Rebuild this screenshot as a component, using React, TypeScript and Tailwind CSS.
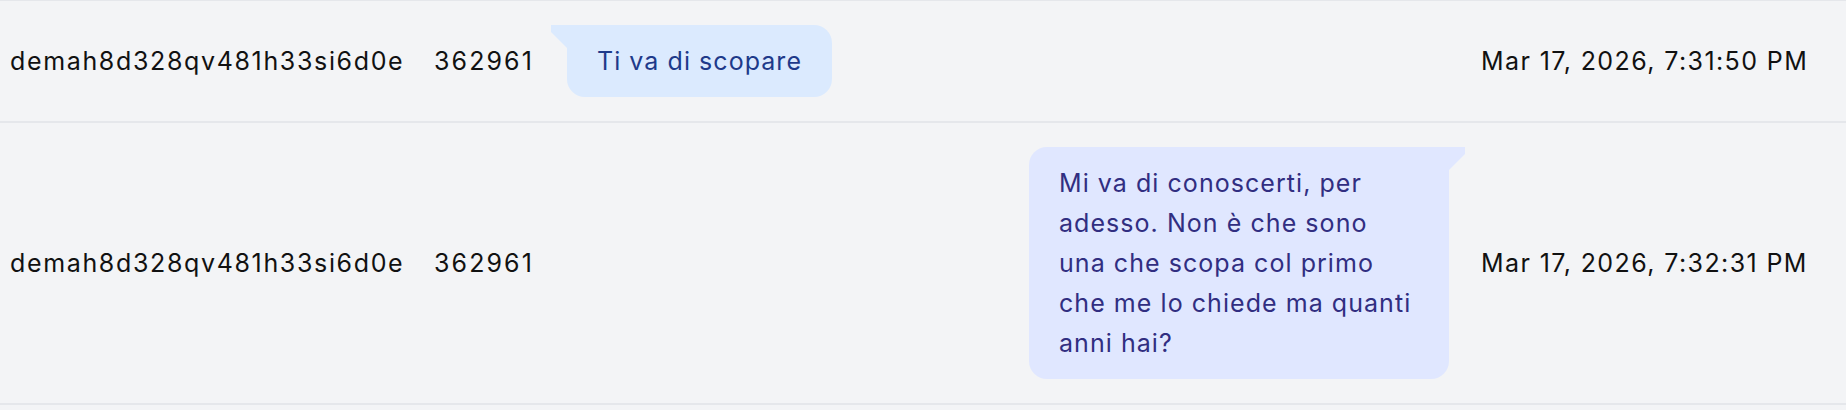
import React from "react";

type Props = {
  id: string;
  num: string;
  side: "left" | "right";
  text: string;
  time: string;
};

function Tail({ side, color }: { side: "left" | "right"; color: string }) {
  return (
    <svg width="16" height="23" viewBox="0 0 16 23" className="block shrink-0">
      {side === "left" ? (
        <polygon points="0,0 16,0 16,23 0,7" fill={color} />
      ) : (
        <polygon points="0,0 16,0 16,7 0,23" fill={color} />
      )}
    </svg>
  );
}

function Row({ id, num, side, text, time }: Props) {
  return (
    <div className="flex items-center border-b-2 border-[#e5e7eb] py-6">
      <div className="w-[418px] shrink-0 pl-[10px] whitespace-nowrap tracking-[1.65px]">{id}</div>
      <div className="w-[133px] shrink-0 pl-[16px] whitespace-nowrap tracking-[2.1px]">{num}</div>
      <div className={`flex min-w-0 flex-1 ${side === "left" ? "justify-start" : "justify-end"}`}>
        {side === "left" ? (
          <div className="flex items-start">
            <Tail side="left" color="#dbeafe" />
            <div className="rounded-[18px] rounded-tl-none bg-[#dbeafe] px-[30px] py-4 leading-[40px] tracking-[1.05px] text-[#1e3a8a]">
              {text}
            </div>
          </div>
        ) : (
          <div className="flex items-start">
            <div className="w-[420px] rounded-[18px] rounded-tr-none bg-[#e0e7ff] px-[30px] py-4 leading-[40px] tracking-[1.05px] text-[#312e81]">
              {text}
            </div>
            <Tail side="right" color="#e0e7ff" />
          </div>
        )}
      </div>
      <div className="w-[381px] shrink-0 pl-[16px] pr-[30px] whitespace-nowrap tracking-[1.4px]">{time}</div>
    </div>
  );
}

export default function App() {
  return (
    <div className="min-h-[410px] w-full bg-[#f3f4f6] font-['Inter',sans-serif] text-[25px] leading-[36px] text-[#111111]">
      <div className="border-t border-[#e5e7eb]">
        <Row
          id="demah8d328qv481h33si6d0e"
          num="362961"
          side="left"
          text="Ti va di scopare"
          time="Mar 17, 2026, 7:31:50 PM"
        />
        <Row
          id="demah8d328qv481h33si6d0e"
          num="362961"
          side="right"
          text="Mi va di conoscerti, per adesso. Non è che sono una che scopa col primo che me lo chiede ma quanti anni hai?"
          time="Mar 17, 2026, 7:32:31 PM"
        />
      </div>
    </div>
  );
}
